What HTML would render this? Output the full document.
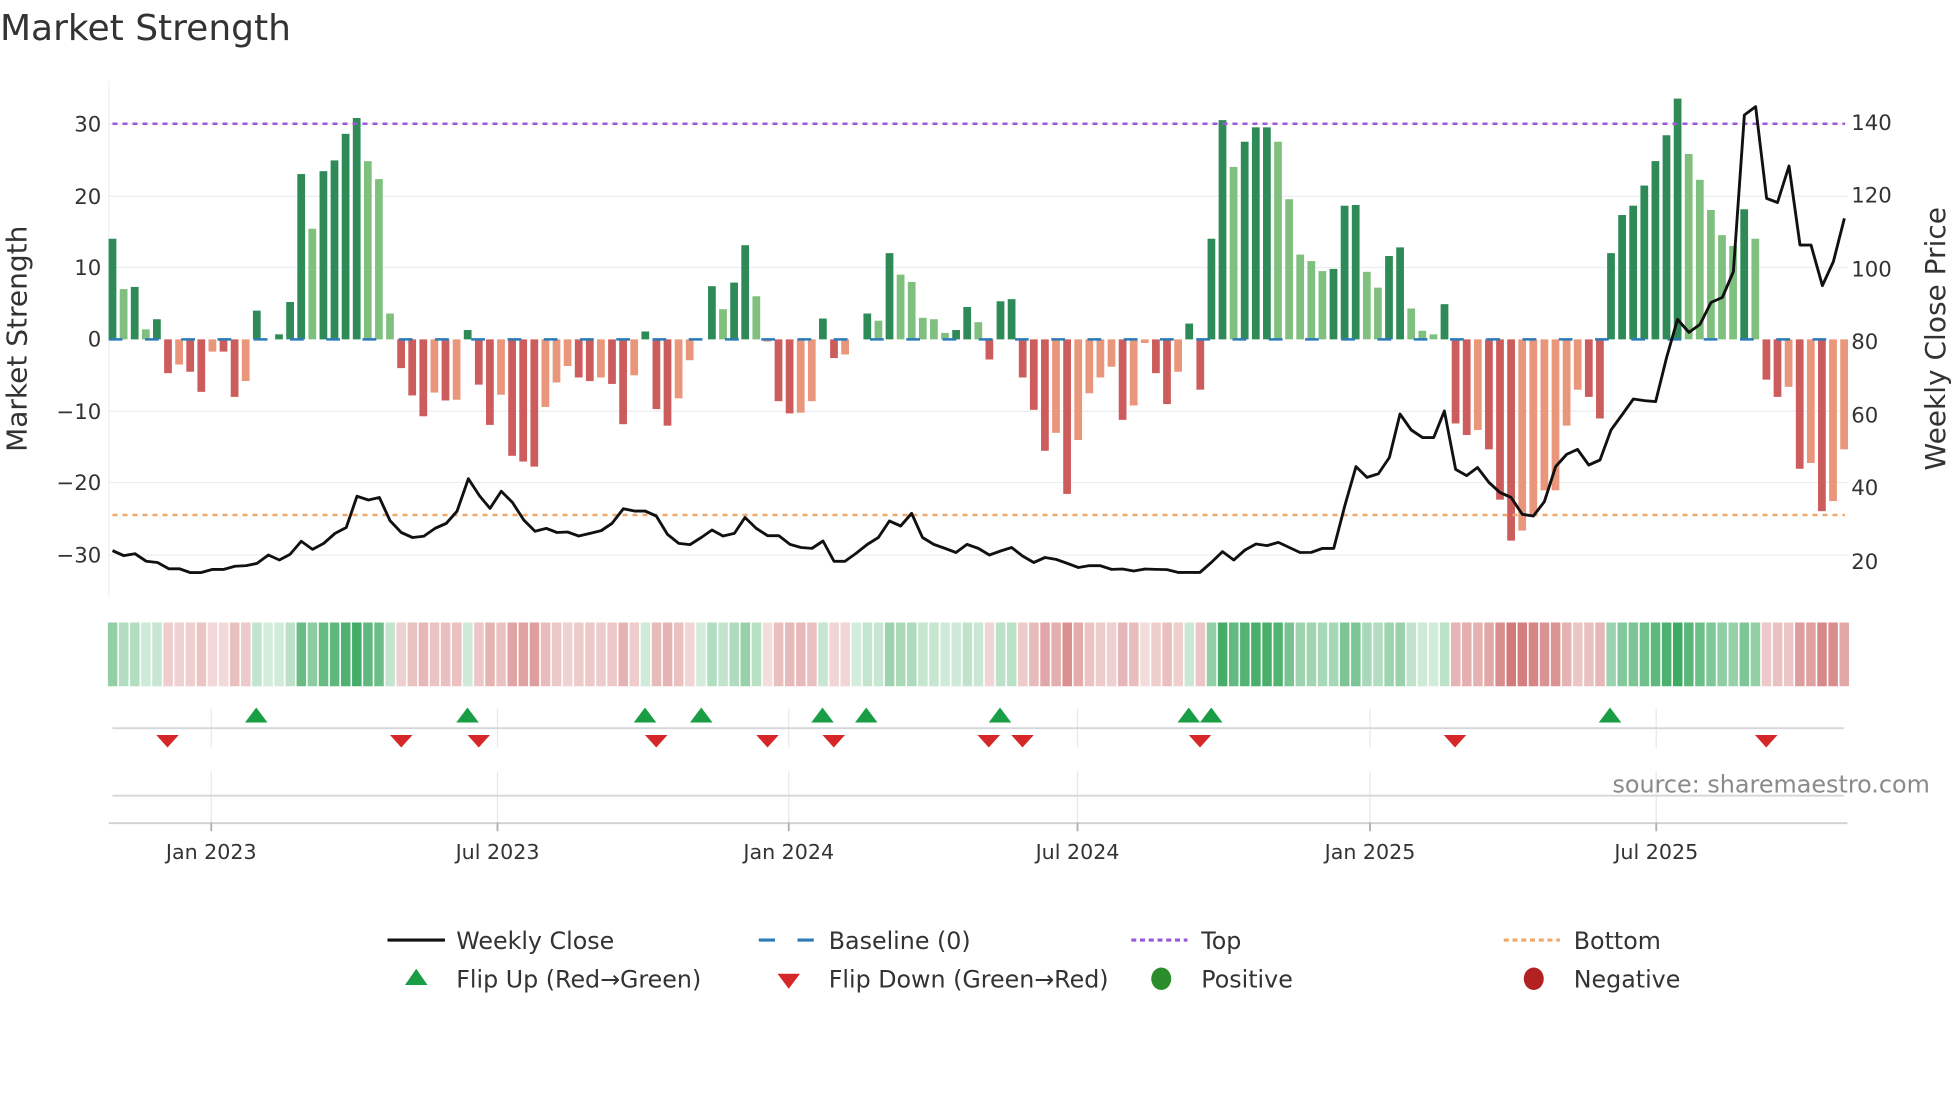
<!DOCTYPE html>
<html><head><meta charset="utf-8">
<style>
html,body{margin:0;padding:0;background:#fff;}
svg{display:block;font-family:"DejaVu Sans","Liberation Sans",sans-serif;}
</style></head>
<body>
<svg id="s" width="1960" height="1102" viewBox="0 0 1568 881.6" xmlns="http://www.w3.org/2000/svg">
<rect width="1568" height="882" fill="#fff"/>
<text x="0" y="32" font-size="28.8" fill="#333">Market Strength</text>
<g id="grid" stroke="#ebedf0" stroke-width="1"></g>
<line x1="87" y1="65" x2="87" y2="478" stroke="#eef0f2" stroke-width="1"/>
<g id="bars"></g>
<line x1="90" y1="99" x2="1476" y2="99" stroke="#9b59d9" stroke-width="2" stroke-dasharray="4,4"/>
<line x1="90" y1="412" x2="1476" y2="412" stroke="#f0a868" stroke-width="2" stroke-dasharray="4,4"/>
<line x1="87" y1="271.5" x2="1478" y2="271.5" stroke="#2b7bb9" stroke-width="2" stroke-dasharray="11,18"/>
<polyline id="price" fill="none" stroke="#111" stroke-width="2.3" stroke-linejoin="round"/>
<g font-size="17" fill="#333" text-anchor="end">
<text x="81" y="105">30</text><text x="81" y="163">20</text><text x="81" y="220">10</text>
<text x="81" y="277">0</text><text x="81" y="335">−10</text><text x="81" y="392">−20</text><text x="81" y="450">−30</text>
</g>
<g font-size="17" fill="#333">
<text x="1481" y="104">140</text><text x="1481" y="162">120</text><text x="1481" y="221">100</text>
<text x="1481" y="279">80</text><text x="1481" y="338">60</text><text x="1481" y="396">40</text><text x="1481" y="455">20</text>
</g>
<text transform="translate(21,271) rotate(-90)" font-size="22.4" fill="#333" text-anchor="middle">Market Strength</text>
<text transform="translate(1556,271) rotate(-90)" font-size="22.4" fill="#333" text-anchor="middle">Weekly Close Price</text>
<g id="heat"></g>
<g stroke="#e6e8eb" stroke-width="1">
<line x1="169" y1="567" x2="169" y2="598"/><line x1="398" y1="567" x2="398" y2="598"/><line x1="631" y1="567" x2="631" y2="598"/>
<line x1="862" y1="567" x2="862" y2="598"/><line x1="1096" y1="567" x2="1096" y2="598"/><line x1="1325" y1="567" x2="1325" y2="598"/>
<line x1="169" y1="617" x2="169" y2="658"/><line x1="398" y1="617" x2="398" y2="658"/><line x1="631" y1="617" x2="631" y2="658"/>
<line x1="862" y1="617" x2="862" y2="658"/><line x1="1096" y1="617" x2="1096" y2="658"/><line x1="1325" y1="617" x2="1325" y2="658"/>
</g>
<line x1="90" y1="582.5" x2="1475" y2="582.5" stroke="#d4d6d9" stroke-width="1.5"/>
<line x1="90" y1="636.5" x2="1475" y2="636.5" stroke="#d4d6d9" stroke-width="1.5"/>
<line x1="87" y1="658.5" x2="1478" y2="658.5" stroke="#cfd1d4" stroke-width="1.5"/>
<g id="flips"></g>
<text x="1290" y="634" font-size="19.1" fill="#8a8a8a">source: sharemaestro.com</text>
<g stroke="#b0b0b0" stroke-width="1.5">
<line x1="169" y1="658" x2="169" y2="665"/><line x1="398" y1="658" x2="398" y2="665"/><line x1="631" y1="658" x2="631" y2="665"/>
<line x1="862" y1="658" x2="862" y2="665"/><line x1="1096" y1="658" x2="1096" y2="665"/><line x1="1325" y1="658" x2="1325" y2="665"/>
</g>
<g font-size="16.5" fill="#333" text-anchor="middle">
<text x="169" y="687">Jan 2023</text><text x="398" y="687">Jul 2023</text><text x="631" y="687">Jan 2024</text>
<text x="862" y="687">Jul 2024</text><text x="1096" y="687">Jan 2025</text><text x="1325" y="687">Jul 2025</text>
</g>
<g font-size="19" fill="#333">
<line x1="310" y1="752" x2="356" y2="752" stroke="#111" stroke-width="2.5"/>
<text x="365" y="759">Weekly Close</text>
<line x1="607" y1="752" x2="652" y2="752" stroke="#2b7bb9" stroke-width="2.5" stroke-dasharray="13,18"/>
<text x="663" y="759">Baseline (0)</text>
<line x1="905" y1="752" x2="950" y2="752" stroke="#9b59d9" stroke-width="2.5" stroke-dasharray="4,3"/>
<text x="961" y="759">Top</text>
<line x1="1203" y1="752" x2="1248" y2="752" stroke="#f0a868" stroke-width="2.5" stroke-dasharray="4,3"/>
<text x="1259" y="759">Bottom</text>
<polygon points="324,788 342,788 333,775" fill="#1a9e45"/>
<text x="365" y="790">Flip Up (Red→Green)</text>
<polygon points="622,779 640,779 631,791" fill="#d62728"/>
<text x="663" y="790">Flip Down (Green→Red)</text>
<ellipse cx="929" cy="783" rx="8" ry="9" fill="#2a8c2a"/>
<text x="961" y="790">Positive</text>
<ellipse cx="1227" cy="783" rx="8" ry="9" fill="#b22222"/>
<text x="1259" y="790">Negative</text>
</g>
</svg>
<script>
var NS="http://www.w3.org/2000/svg";
function el(t,a,p){var e=document.createElementNS(NS,t);for(var k in a)e.setAttribute(k,a[k]);document.getElementById(p).appendChild(e);return e;}
[99,157,214,329,386,444].forEach(function(y){el("line",{x1:87,x2:1478,y1:y,y2:y},"grid");});
var d="14G,7g,7.3G,1.4g,2.8G,-4.7R,-3.5r,-4.5R,-7.3R,-1.7r,-1.7R,-8R,-5.8r,4G,0g,0.7G,5.2G,23G,15.4g,23.4G,24.9G,28.6G,30.8G,24.8g,22.3g,3.6g,-4R,-7.8R,-10.7R,-7.4r,-8.5R,-8.4r,1.3G,-6.3R,-11.9R,-7.7r,-16.2R,-17R,-17.7R,-9.4r,"+
"-6r,-3.7r,-5.3R,-5.8R,-5.3r,-6.2R,-11.8R,-5r,1.1G,-9.7R,-12R,-8.2r,-2.9r,0g,7.4G,4.2g,7.9G,13.1G,6g,-0.3r,-8.6R,-10.3R,-10.2r,-8.6r,2.9G,-2.6R,-2.1r,0g,3.6G,2.6g,12G,9g,8g,3g,2.8g,0.9g,1.3G,4.5G,2.4g,-2.8R,5.3G,"+
"5.6G,-5.3R,-9.8R,-15.5R,-13r,-21.5R,-14r,-7.5r,-5.3r,-3.8r,-11.2R,-9.2r,-0.5r,-4.7R,-9R,-4.5r,2.2G,-7R,14G,30.5G,24g,27.5G,29.5G,29.5G,27.5g,19.5g,11.8g,10.9g,9.5g,9.8G,18.6G,18.7G,9.4g,7.2g,11.6G,12.8G,4.3g,1.2g,0.7g,"+
"4.9G,-11.7R,-13.3R,-12.6r,-15.3R,-22.3R,-28R,-26.6r,-24.6r,-21r,-21r,-12r,-7r,-8R,-11R,12G,17.3G,18.6G,21.4G,24.8G,28.4G,33.5G,25.8g,22.2g,18g,14.5g,13g,18.1G,14g,-5.6R,-8R,-6.6r,-18R,-17.2r,-23.9R,-22.5r,-15.3r";
var C={G:"#2e8b57",g:"#80c07f",R:"#cd5c5c",r:"#e9967a"};
var items=d.split(","),step=8.88,x0=90;
items.forEach(function(s,i){
 var t=s.slice(-1),v=parseFloat(s),x=x0+i*step,z=271.5,h=Math.abs(v)*5.75;
 if(h>0.3) el("rect",{x:x-3.1,y:v>0?z-h:z,width:6.2,height:h,fill:C[t]},"bars");
 var a=Math.min(1,Math.abs(v)/32),col;
 if(v>=0){col="rgb("+Math.round(255-(255-40)*(0.2+0.7*a))+","+Math.round(255-(255-160)*(0.2+0.7*a))+","+Math.round(255-(255-80)*(0.2+0.7*a))+")";}
 else{col="rgb("+Math.round(255-(255-200)*(0.2+0.7*a))+","+Math.round(255-(255-90)*(0.2+0.7*a))+","+Math.round(255-(255-90)*(0.2+0.7*a))+")";}
 el("rect",{x:x-3.7,y:498,width:7.6,height:51,fill:col},"heat");
});
var p="90,440.5 99,444.5 108,443 117,449 126,450 135,455 143.5,455 152,458 161,458 170,455.5 179,455.5 188,453 197,452.5 205.6,450.7 214.7,444 223.5,448 232,443.5 241,433 250,439.5 259,434.7 268,426.7 277,422 285.6,397 294.7,400 303.5,398 312,416.5 321,426 330,430 339,429 348,422.7 357,418.7 365.6,409 374.7,383 383.5,396.5 392,406.7 401,393 410,402 419,416 428,425 437,422.7 445.6,426 454,425.6 463,428.8 472,426.7 481,424.5 489.6,418.7 498.7,407 507.5,408.8 516,408.8 525,412.8 534,427.5 543,434.7 552,435.7 561,430 569.6,424 578.4,428.8 587.5,426.7 596,414 605,422.7 614,428.5 623,428.5 632,435.5 640.8,438 649.6,438.7 658.4,432.8 667.2,449 676,449 684.8,442.7 693.9,435.5 702.7,430 711.5,416.8 720.5,420.8 729.3,410.7 738,430 747,435.5 756,438.7 764.8,442 773.6,435.5 782.7,438.7 791.5,444 800.5,440.8 809.3,438 818,444.8 827,450 836,446 844.8,447.5 853.9,450.7 862.7,454 871.5,452.5 880,452.5 889.3,455.5 898,455.2 907,456.8 916,455.2 924.8,455.5 933.6,455.7 942.4,457.9 951.5,457.9 960,457.9 969,450 978,441.3 987,448 996,440 1004.8,435.2 1013.6,436.5 1022.7,433.9 1031.5,438 1040,442 1049,441.9 1058,438.7 1067,438.7 1076,404 1084.8,373.3 1093.6,381.9 1102.7,379 1111.5,366 1120,331.2 1129,344 1138,350 1147,350 1155.5,328.8 1164.5,375.5 1173.3,380.5 1182,374 1191.2,386 1200,394 1208.8,397.9 1217.9,411.5 1226.7,412.8 1235.5,401.3 1244.5,373.3 1253.3,363.5 1262,359.5 1271,372 1280,368 1288.8,344 1297.9,331.5 1306.7,319.2 1315.5,320.5 1324.5,321.3 1333.3,285.9 1342,255.5 1351.2,265.9 1360,259.5 1368.8,242 1377.9,237.9 1386.7,217.3 1395.5,92 1404.5,85.3 1413.3,158.7 1422,162 1431.2,132.8 1440,196 1448.8,196 1457.9,228.5 1466.7,209.3 1475.5,174.7";
document.getElementById("price").setAttribute("points",p);
[205,374,516,561,658,693,800,951,969,1288].forEach(function(x){el("polygon",{points:(x-9)+",578 "+(x+9)+",578 "+x+",566",fill:"#1a9e45"},"flips");});
[134,321,383,525,614,667,791,818,960,1164,1413].forEach(function(x){el("polygon",{points:(x-9)+",588 "+(x+9)+",588 "+x+",598",fill:"#d62728"},"flips");});
</script>
</body></html>
